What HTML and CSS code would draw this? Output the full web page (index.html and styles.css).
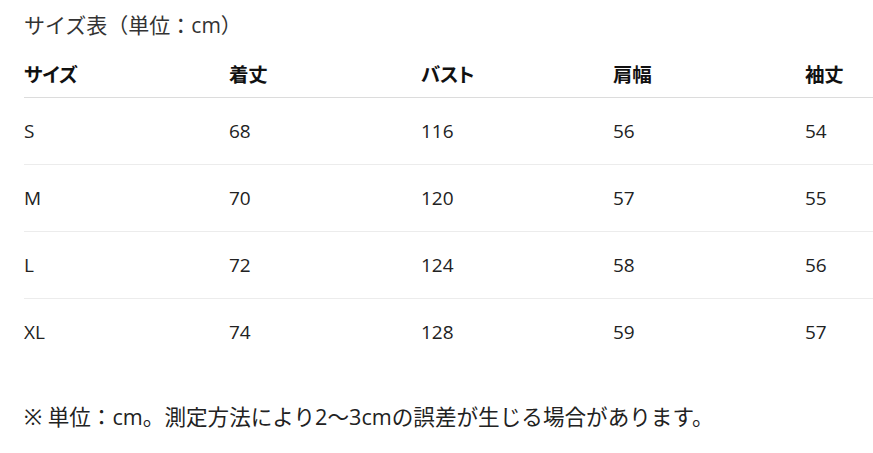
FILE: index.html
```html
<!DOCTYPE html>
<html lang="ja">
<head>
<meta charset="utf-8">
<link rel="stylesheet" href="styles.css">
</head>
<body>
<main class="page">
  <h1 class="title">サイズ表（単位：cm）</h1>
  <table class="size-table">
    <thead>
      <tr>
        <th class="col-size">サイズ</th>
        <th class="col-mid">着丈</th>
        <th class="col-mid">バスト</th>
        <th class="col-mid">肩幅</th>
        <th class="col-last">袖丈</th>
      </tr>
    </thead>
    <tbody>
      <tr><td>S</td><td>68</td><td>116</td><td>56</td><td>54</td></tr>
      <tr><td>M</td><td>70</td><td>120</td><td>57</td><td>55</td></tr>
      <tr><td>L</td><td>72</td><td>124</td><td>58</td><td>56</td></tr>
      <tr><td>XL</td><td>74</td><td>128</td><td>59</td><td>57</td></tr>
    </tbody>
  </table>
  <p class="note">※ 単位：cm。測定方法により2～3cmの誤差が生じる場合があります。</p>
</main>
</body>
</html>
```
FILE: styles.css
```css
html, body {
  margin: 0;
  padding: 0;
  background: #fff;
}
body {
  font-family: "Segoe UI", "Open Sans", "Noto Sans", "Noto Sans CJK JP", sans-serif;
  color: #222;
}
.page {
  padding: 10px 0 0 24px;
}
.title {
  margin: 0;
  font-size: 21px;
  font-weight: 400;
  line-height: 30px;
  color: #333;
}
.size-table {
  border-collapse: collapse;
  width: 849px;
  table-layout: fixed;
}
.size-table th {
  text-align: left;
  font-size: 19.5px;
  font-weight: 700;
  line-height: 26px;
  padding: 22px 0 9px 0;
  border-bottom: 1px solid #dcdcdc;
  color: #111;
  font-feature-settings: "palt";
  letter-spacing: -0.3px;
}
.col-size { width: 205px; }
.col-mid { width: 192px; }
.col-last { width: auto; }
.size-table td {
  font-size: 19px;
  line-height: 26px;
  padding: 20px 0;
  border-bottom: 1px solid #ececec;
  color: #222;
}
.size-table tbody tr:last-child td {
  border-bottom: none;
}
.note {
  margin: 37px 0 0 0;
  font-size: 21.6px;
  line-height: 30px;
  color: #222;
}
```
